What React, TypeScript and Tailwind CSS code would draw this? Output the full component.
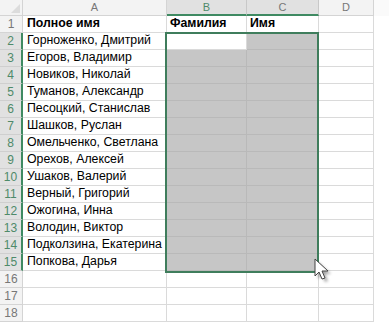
import React from "react";

const names = [
  "Горноженко, Дмитрий",
  "Егоров, Владимир",
  "Новиков, Николай",
  "Туманов, Александр",
  "Песоцкий, Станислав",
  "Шашков, Руслан",
  "Омельченко, Светлана",
  "Орехов, Алексей",
  "Ушаков, Валерий",
  "Верный, Григорий",
  "Ожогина, Инна",
  "Володин, Виктор",
  "Подколзина, Екатерина",
  "Попкова, Дарья",
];

export default function App() {
  const rows = Array.from({ length: 18 }, (_, i) => i + 1);
  return (
    <div
      className="relative w-[389px] h-[323px] overflow-hidden bg-white"
      style={{ fontFamily: '"Liberation Sans", Arial, sans-serif' }}
    >
      {/* column header row */}
      <div className="flex h-[16px]">
        <div className="relative w-[23px] h-full bg-[#f3f3f3] border-r border-b border-[#d4d4d4]">
          <div className="absolute right-[2px] bottom-[2px] w-0 h-0 border-l-[9px] border-l-transparent border-b-[9px] border-b-[#dcdcdc]" />
        </div>
        <div className="w-[144px] h-full bg-[#f3f3f3] border-r border-b border-[#d4d4d4] flex items-center justify-center text-[11px] text-[#777]">
          A
        </div>
        <div className="w-[80px] h-full bg-[#e1e1e1] border-r border-[#c8c8c8] border-b-2 border-b-[#3f8a62] flex items-center justify-center text-[11px] text-[#4e8a69]">
          B
        </div>
        <div className="w-[72px] h-full bg-[#e1e1e1] border-r border-[#c8c8c8] border-b-2 border-b-[#3f8a62] flex items-center justify-center text-[11px] text-[#777]">
          C
        </div>
        <div className="w-[55px] h-full bg-[#f3f3f3] border-r border-b border-[#d4d4d4] flex items-center justify-center text-[11px] text-[#777]">
          D
        </div>
        <div className="flex-1 h-full bg-[#fafafa]" />
      </div>
      {rows.map((r) => {
        const sel = r >= 2 && r <= 15;
        const name = r === 1 ? "Полное имя" : names[r - 2] ?? "";
        return (
          <div key={r} className="flex h-[17px]">
            <div
              className={
                sel
                  ? "w-[23px] h-full bg-[#e1e1e1] border-b border-[#cfcfcf] border-r-2 border-r-[#3f8a62] flex items-center justify-center text-[12px] text-[#4e8a69]"
                  : "w-[23px] h-full bg-[#f3f3f3] border-b border-r border-[#d4d4d4] flex items-center justify-center text-[12px] text-[#777]"
              }
            >
              {r}
            </div>
            <div
              className={
                "w-[144px] h-full border-r border-b border-[#dadada] flex items-end pb-[1px] pl-[4px] text-[12.3px] leading-[15px] text-black whitespace-nowrap " +
                (r === 1 ? "font-bold" : "")
              }
            >
              {name}
            </div>
            <div
              className={
                "w-[80px] h-full border-r border-b flex items-end pb-[1px] pl-[3px] text-[12.3px] leading-[15px] font-bold text-black whitespace-nowrap " +
                (sel && r !== 2 ? "bg-[#c6c6c6] border-[#b9b9b9]" : "border-[#dadada]")
              }
            >
              {r === 1 ? "Фамилия" : ""}
            </div>
            <div
              className={
                "w-[72px] h-full border-r border-b flex items-end pb-[1px] pl-[3px] text-[12.3px] leading-[15px] font-bold text-black whitespace-nowrap " +
                (sel ? "bg-[#c6c6c6] border-[#b9b9b9]" : "border-[#dadada]")
              }
            >
              {r === 1 ? "Имя" : ""}
            </div>
            <div className="w-[55px] h-full border-r border-b border-[#dadada]" />
            <div className="flex-1 h-full" />
          </div>
        );
      })}

      {/* selection border */}
      <div className="absolute left-[165px] top-[32px] w-[154px] h-[241px] border-2 border-[#3f7d5c] pointer-events-none" />

      {/* mouse cursor */}
      <svg
        className="absolute left-[312px] top-[258px]"
        width="26"
        height="30"
        viewBox="0 0 26 30"
      >
        <defs>
          <filter id="sh" x="-50%" y="-50%" width="200%" height="200%">
            <feGaussianBlur stdDeviation="1.6" />
          </filter>
        </defs>
        <path
          d="M6 4 L6 21 L10 17 L13 24 L16 23 L13 16 L19 16 Z"
          fill="#000"
          opacity="0.35"
          filter="url(#sh)"
        />
        <path
          d="M3 1 L3 18 L7 14 L10 21 L13 20 L10 13 L16 13 Z"
          fill="#fff"
          stroke="#444"
          strokeWidth="1"
          strokeLinejoin="round"
        />
      </svg>
    </div>
  );
}
